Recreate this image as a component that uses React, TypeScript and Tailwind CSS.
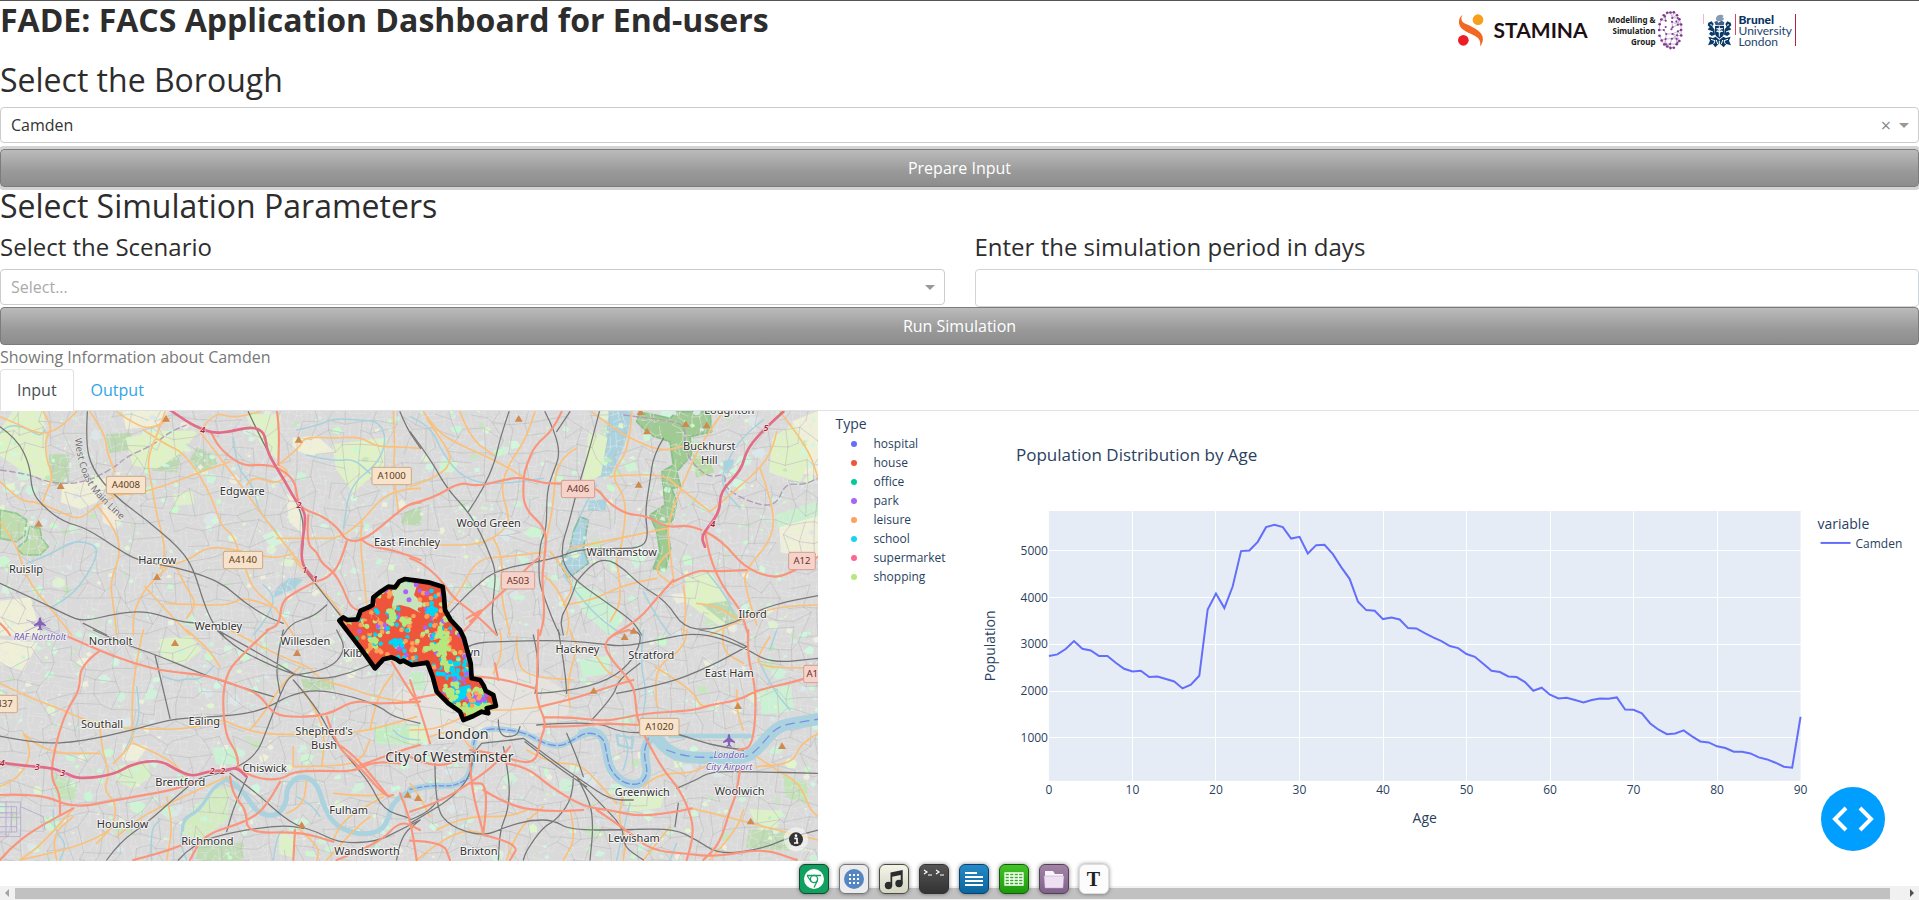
import { useState } from "react";
import type { ReactNode } from "react";

/* ---------- geometry helpers ---------- */

type Line = string;

// Turns "x,y x,y ..." into a smooth path that runs through segment midpoints.
function smooth(points: Line): string {
  const p = points.split(" ").map((s) => s.split(",").map(Number));
  let d = `M${p[0][0]},${p[0][1]}`;
  for (let i = 1; i < p.length - 1; i++) {
    const mx = (p[i][0] + p[i + 1][0]) / 2;
    const my = (p[i][1] + p[i + 1][1]) / 2;
    d += `Q${p[i][0]},${p[i][1]} ${mx},${my}`;
  }
  const last = p[p.length - 1];
  return d + `L${last[0]},${last[1]}`;
}

const paths = (lines: Line[]) => lines.map(smooth).join("");

function random(seed: number) {
  let a = seed * 2654435761;
  return () => {
    a = (a + 0x6d2b79f5) | 0;
    let t = Math.imul(a ^ (a >>> 15), 1 | a);
    t = (t + Math.imul(t ^ (t >>> 7), 61 | t)) ^ t;
    return ((t ^ (t >>> 14)) >>> 0) / 4294967296;
  };
}

const MAP_W = 2454;
const MAP_H = 1350;

function streetMesh(step: number, seed: number, keep: number): string {
  const r = random(seed);
  const cols = Math.ceil(MAP_W / step) + 2;
  const rows = Math.ceil(MAP_H / step) + 2;
  const pts: number[][][] = [];
  for (let j = 0; j < rows; j++) {
    pts.push([]);
    for (let i = 0; i < cols; i++) {
      pts[j].push([
        Math.round((i - 0.5 + (r() - 0.5) * 0.9) * step),
        Math.round((j - 0.5 + (r() - 0.5) * 0.9) * step),
      ]);
    }
  }
  let d = "";
  for (let j = 0; j < rows - 1; j++) {
    for (let i = 0; i < cols - 1; i++) {
      const [x, y] = pts[j][i];
      if (r() < keep) d += `M${x},${y}L${pts[j][i + 1][0]},${pts[j][i + 1][1]}`;
      if (r() < keep) d += `M${x},${y}L${pts[j + 1][i][0]},${pts[j + 1][i][1]}`;
    }
  }
  return d;
}

const GREENS = ["#c9f5d6", "#c8facc", "#d2f7dc", "#dff6cf", "#c6e6bd", "#cff7e0", "#cdf3d8", "#eef0dc", "#dbe7ea"];

function patches(count: number, seed: number, min: number, max: number) {
  const r = random(seed);
  const out: { d: string; fill: string }[] = [];
  for (let k = 0; k < count; k++) {
    const x = r() * MAP_W;
    const y = r() * MAP_H;
    const central = Math.hypot((x - 1480) / 700, (y - 820) / 380) < 0.6;
    const s = (min + r() * r() * (max - min)) * (central ? 0.6 : 1);
    const turn = r() * 6;
    const n = 4 + Math.floor(r() * 3);
    let d = "";
    for (let i = 0; i < n; i++) {
      const a = turn + (i / n) * Math.PI * 2;
      const q = s * (0.6 + r() * 0.6);
      d += `${i ? "L" : "M"}${Math.round(x + Math.cos(a) * q)},${Math.round(y + Math.sin(a) * q * 0.85)}`;
    }
    out.push({ d: d + "Z", fill: GREENS[Math.floor(r() * GREENS.length)] });
  }
  return out;
}

/* ---------- map data, four tiles ---------- */

interface Tile {
  x: number;
  y: number;
  motorway: Line[];
  primary: Line[];
  secondary: Line[];
  rail: Line[];
  stream: Line[];
  border: Line[];
}

const TILES: Tile[] = [
  {
    x: 0,
    y: -18,
    motorway: ["510,15 560,50 600,70 640,85 690,80 740,68 775,70 795,90 800,130 815,165 850,220 885,285 915,320 915,360 905,420 905,480 945,525"],
    primary: [
      "635,85 650,120 700,165 740,183 780,178 832,185 885,225 892,285 908,312 970,335 1015,370 1040,410 1095,405 1190,325 1225,298 1262,292",
      "830,15 838,60 835,180",
      "925,330 918,415 950,440 965,475 1000,500 1030,550 1050,605 1085,620",
      "0,655 20,675 30,690",
      "1040,410 1020,480 980,520 945,530 880,565 845,590 838,660 800,675",
      "1090,408 1110,425 1180,435 1262,465",
    ],
    secondary: [
      "130,20 160,70 135,100 140,170 160,210 140,260 125,300",
      "270,20 315,85 320,140 345,200",
      "350,20 420,70 470,65 510,40",
      "495,20 480,70 440,160 455,240 470,330 490,400 495,450 480,490",
      "430,75 500,120 545,140 600,210 640,290 665,365 700,390 715,440 740,500 760,555 830,610 880,690",
      "600,80 700,210 780,320 840,400 905,480",
      "330,270 400,270 500,240 590,205 690,170",
      "0,230 60,290 110,290 190,325 240,345 290,300 345,275",
      "290,300 340,360 365,440 330,530 340,600 350,690",
      "0,350 50,420 70,490 100,550 160,620 215,690",
      "480,490 560,470 620,425 700,432 790,455 840,458 880,445",
      "500,490 440,540 400,620 400,690",
      "530,490 560,550 590,595 560,640",
      "500,595 600,600 690,600 730,575 830,610",
      "835,180 870,150 900,125 915,95 1000,100 1080,95 1130,125 1190,125 1262,130",
      "740,240 760,210 830,240 870,200 835,180",
      "1180,20 1185,120 1180,200 1195,320",
      "1262,250 1170,250 1085,350 1020,400 950,400 830,400",
      "1085,350 1080,410 1090,500 1100,600",
      "0,35 60,60 120,90 180,70 230,20",
      "570,690 520,640 435,545",
      "600,80 640,20 700,40 780,20",
      "880,460 930,520 1000,590 1030,640",
    ],
    rail: [
      "0,65 50,100 90,180 95,260 130,305 190,350 260,370 350,430 415,468 520,485 620,515 680,545 730,590 800,635 850,655",
      "262,20 257,110 275,190 345,275 440,345 540,430 580,490 610,590 640,660 670,690",
      "745,20 800,140 905,310 912,400 902,480 945,535 1020,630",
      "0,535 120,590 200,630 250,650 350,625 440,618 540,650 600,655",
      "250,655 320,690",
      "850,690 870,655 940,635 980,600",
      "1200,20 1220,70 1262,130",
    ],
    stream: [
      "0,85 20,60 70,65 120,95 135,75",
      "890,75 960,60 1000,40 1080,45 1140,50 1160,110 1130,180 1050,240 1030,370",
      "920,150 1000,170 1060,160 1110,205",
      "700,100 710,190 760,240 775,320 830,380",
      "80,475 150,450 220,405 290,420 290,460 230,560 150,610",
      "790,540 830,570 800,640 760,690",
    ],
    border: ["0,195 80,205 150,235 250,235 340,190 380,155 460,120 510,80 560,60"],
  },
  {
    x: 1230,
    y: -18,
    motorway: ["1120,20 1080,55 1010,130 995,195 930,260 930,320 885,378 875,400 885,425"],
    primary: [
      "0,298 70,280 150,230 200,245 300,220 340,218 400,235 460,235 560,245 590,290 650,328 710,332 770,368 830,360 875,375",
      "455,20 430,75 375,120 350,180 340,218 340,310 410,370 405,450 395,520 405,630 390,690",
      "885,378 940,410 1000,485 1085,520 1140,505 1225,455",
      "790,530 860,495 900,500 1010,495",
      "885,378 895,450 940,550 990,610 1015,690",
      "790,525 740,580 690,640 610,690",
      "0,460 30,470 90,520 130,580 200,630 260,690",
      "180,650 280,560 350,490 390,455",
      "150,690 240,600 170,640",
    ],
    secondary: [
      "40,20 80,80 150,120 220,150 300,190 340,218",
      "0,245 90,215 130,160 90,100 50,40",
      "375,20 350,100 300,170 270,250 300,340 280,380 210,420 100,420 0,420",
      "250,400 280,450 270,560 300,690",
      "500,130 440,160 430,300 410,400",
      "545,20 610,70 680,110 760,140 830,120",
      "665,20 660,130 600,210 650,280 640,400 620,470",
      "600,215 750,200 810,250 900,320",
      "940,20 880,100 820,230 770,360 780,440 790,520",
      "1100,80 1090,130 1050,190 960,270 900,320",
      "1050,190 1090,300 1090,400 1000,500 1010,560 1040,660",
      "480,430 600,405 700,385 770,370",
      "620,470 640,580 600,650",
      "460,600 540,590 640,540 740,520",
      "820,540 830,600 820,690",
      "780,440 720,490 790,540",
      "860,595 920,600 990,650",
      "1225,600 1120,600 1000,640 900,690",
      "410,440 300,455 200,460 150,560 100,620",
      "420,440 500,530 460,600",
      "1110,20 1190,120 1225,220",
      "150,20 180,100 250,150",
      "400,510 440,540 480,640 470,690",
    ],
    rail: [
      "0,80 60,160 110,250 175,320 215,390 240,450 258,500 250,580 245,640 262,690",
      "297,20 270,100 255,170 220,250 175,320",
      "405,20 435,80 450,150 430,200 410,260 410,375 390,410 385,520 400,570 430,650 450,690",
      "568,20 540,130 500,260 475,360 455,420 460,480 500,530 600,600 670,650 695,690",
      "480,20 440,80",
      "760,100 730,150 720,230 705,320 715,400 690,430 600,430 500,435 450,455 385,470 260,495 200,540 120,620 60,690",
      "500,530 540,480 590,460 640,490 690,540 770,590 820,668 900,675 980,650 1060,610 1130,590 1225,572",
      "500,530 480,590 450,640 460,690",
    ],
    stream: [
      "0,35 60,60 100,150 160,220 250,240 400,220",
      "460,510 520,590 580,650 640,690",
      "1060,45 1000,90 950,170 930,240 990,310",
      "560,240 530,290 510,335",
      "700,560 730,620 780,690",
      "890,500 940,560 970,620",
    ],
    border: ["640,30 720,40 760,45 830,60 820,140 890,220 950,205 940,250 1040,300 1100,300 1125,235 1180,240 1225,220"],
  },
  {
    x: 0,
    y: 657,
    motorway: ["0,398 80,408 150,413 190,425 235,448 340,435 400,400 480,390 530,420 575,440 620,425 680,420 710,412 740,440"],
    primary: [
      "205,20 300,62 400,100 500,125 620,135 720,170 780,195 810,240 850,262 980,258 1060,210 1130,222 1260,215",
      "300,62 240,105 240,180 200,240 170,330 150,440 180,490 180,555",
      "805,0 740,60 668,140 672,310 712,370 715,420",
      "0,495 120,490 220,535 350,510 530,478 590,450",
      "0,690 30,655 100,600 220,535",
      "715,415 760,445 840,450 880,425 960,422 1060,425 1120,395 1200,400",
      "840,455 800,530 740,575 610,615 570,690",
      "690,440 695,490 740,540 740,610 900,605 1000,635",
      "885,600 880,690",
      "980,260 1010,350 1070,400 1155,500 1180,495",
      "1010,340 1060,370 1165,500",
      "1175,95 1215,160 1250,215",
      "1070,410 1150,380 1240,350 1260,345",
      "1010,690 1140,640 1200,570 1260,600",
      "400,690 480,670 560,640",
      "1200,490 1230,560 1250,690",
    ],
    secondary: [
      "0,160 80,200 190,240 300,290 400,295 550,300 670,270",
      "300,290 305,360 330,430 310,480 350,520 340,590 290,640",
      "430,0 400,130 395,290 400,340 340,400",
      "400,340 470,370 520,400 560,440",
      "560,0 620,50 660,110",
      "70,310 100,360 60,440 0,470",
      "220,535 130,640 60,690",
      "170,690 150,620 220,560",
      "350,620 420,560 530,510 680,440",
      "500,500 520,580 500,690",
      "690,0 840,80 930,110 960,150 1040,170 1120,200 1250,220",
      "670,270 750,310 900,315 1010,315 1110,300 1250,260",
      "750,300 800,240 840,170 900,110",
      "910,180 960,260 975,330 965,410",
      "880,410 960,410 1080,400 1110,330",
      "1000,630 1020,580 1080,540 1150,500",
      "860,550 910,530 920,450",
      "900,600 960,650 950,690",
      "980,690 1060,600 1110,560",
      "1000,490 1100,500 1160,490",
      "60,690 200,660 300,620 340,590",
      "880,350 880,410",
      "70,310 130,370 300,370",
      "1110,300 1130,200 1180,130",
    ],
    rail: [
      "280,0 380,45 470,75 600,130 700,165 820,200",
      "465,75 490,180 510,265",
      "0,318 120,342 240,335 400,300 510,268 600,262 720,255 800,235 870,195 950,178 1060,200 1140,230 1180,260 1260,280",
      "320,690 360,635 440,580 540,490 600,440 690,425 770,375 800,300 830,220 860,150 880,135",
      "650,0 700,50 800,100 870,130 960,150 1050,130 1130,95",
      "660,5 740,50 830,100 880,130",
      "850,0 825,100 840,190",
      "880,135 980,125 1040,60 1010,0",
      "690,430 760,480 870,580 950,605 1020,640 1130,635 1200,600 1260,570",
      "535,690 580,640 700,605 850,585 910,595",
      "740,445 705,520 680,605",
      "880,150 950,230 1000,330 1060,400 1110,460 1150,540 1230,565",
      "1190,690 1200,620 1260,570",
    ],
    stream: [
      "410,170 420,240 410,290 370,370",
      "490,140 530,155 560,145 600,150 640,110",
      "545,600 540,640 560,690",
      "160,540 160,600 200,640 180,690",
      "455,690 450,600 480,570",
      "820,690 830,620 850,600",
      "1180,300 1200,325 1260,330",
      "890,500 930,520 960,560",
    ],
    border: [],
  },
  {
    x: 1230,
    y: 657,
    motorway: [],
    primary: [
      "660,0 610,10 580,45 605,90 650,140 675,180 680,270 720,350 760,420 810,480 845,560 850,620 830,690",
      "1015,0 1010,70 1040,180 1030,350 985,360",
      "1225,130 1180,150 1040,180 990,210 900,225 850,242 700,250 590,275 490,262 400,262",
      "400,290 490,290 570,280 690,285",
      "385,0 382,130 378,210 410,280 390,330 380,390 340,400 250,370 180,360",
      "185,140 250,140 375,175",
      "0,150 40,270 60,340",
      "0,210 60,195 110,190",
      "290,400 350,410 420,470 520,530 600,540 690,560 800,545 845,535",
      "180,370 180,460 220,610",
      "220,480 300,530 420,545 520,540",
      "220,610 240,460 180,460",
      "0,545 80,520 180,460 260,400 300,350",
      "220,615 330,640 300,690",
      "990,420 980,490 960,540 930,640 880,690",
      "0,632 100,635 120,690",
      "560,540 650,600 720,660 830,672 920,680 1060,655 1160,690",
      "390,230 480,210 600,170 670,150",
      "255,100 265,150",
      "0,380 80,420 180,370",
    ],
    secondary: [
      "270,0 280,60 250,130",
      "480,0 500,60 550,60 590,130 650,150",
      "500,60 470,150 480,230",
      "830,0 830,50 735,110 740,230",
      "735,110 850,180 870,230 900,225",
      "1080,20 1040,80 1050,110 1180,115 1225,110",
      "940,0 930,60 1000,100",
      "1000,300 980,250 980,180",
      "1225,310 1170,340 1150,400 1040,410",
      "1040,380 1100,420 1170,460 1200,540 1225,560",
      "845,535 950,560 1060,590 1225,630",
      "700,470 740,430 850,430 900,400",
      "300,240 400,230",
      "60,320 150,290 160,330 200,370 290,400",
      "350,360 420,400 500,400 540,430 620,520",
      "0,460 30,500 60,560",
      "640,500 620,560 650,620 640,690",
      "80,600 150,560 300,560 350,540",
      "290,690 320,600 400,530",
      "480,540 500,620 460,690",
      "700,690 780,590",
      "0,300 60,300 120,280 200,240 300,240",
      "20,690 80,640 160,600 220,610",
      "900,690 980,600 1000,540",
      "320,20 320,100 360,140 490,150",
    ],
    rail: [
      "340,325 440,400 520,455 600,510 670,510",
      "345,335 440,410 530,470",
      "380,285 550,272 640,310 740,305 800,310 900,345 1000,360",
      "800,475 860,450 900,425 1020,425 1225,430",
      "370,15 390,100 375,190",
      "445,0 465,120 470,190",
      "380,190 470,185 600,150 670,90 700,10 650,0",
      "120,80 180,40 260,35 440,30 560,40 640,50 740,30 870,5 1000,50 1080,100 1225,85",
      "620,190 760,165 900,110 1010,50",
      "0,580 60,545 130,500 180,440 190,370 215,340",
      "0,570 50,550 85,510",
      "215,340 270,335 340,325",
      "265,270 265,320 320,320 330,290",
      "75,400 75,530 120,590 220,620 290,590 360,570 430,570 480,600 640,600 790,595 860,630 930,675 1060,655 1130,625 1225,600",
      "280,350 300,450 295,540 270,600 265,690",
      "500,440 540,510 550,590 540,690",
      "510,455 560,510 640,590 640,650 700,690",
      "490,440 490,500 440,570 400,590 350,660 340,690",
      "545,270 610,200 625,150 690,100",
      "470,310 500,380 520,440",
      "805,520 795,590",
      "870,0 930,10 1010,50",
    ],
    stream: [
      "700,0 690,100 710,180 700,250 690,320",
      "640,310 660,350 640,420",
      "1050,100 1090,180 1140,240",
      "620,690 640,600 660,520",
      "1100,0 1080,60",
      "780,690 800,640",
    ],
    border: [],
  },
];

const AREAS: { tile: number; fill: string; stroke?: string; pts: string }[] = [
  { tile: 0, fill: "#bfdcaf", stroke: "#8cc98a", pts: "0,315 50,325 80,345 75,390 50,410 0,400" },
  { tile: 0, fill: "#bfdcaf", stroke: "#8cc98a", pts: "90,365 120,370 125,400 145,425 120,450 70,450 50,430 80,405" },
  { tile: 0, fill: "#bcd9b2", pts: "150,150 205,150 205,235 165,240 148,200" },
  { tile: 0, fill: "#bcd9b2", pts: "590,130 640,150 650,175 600,200 572,165" },
  { tile: 0, fill: "#bcd9b2", pts: "320,90 390,85 400,130 330,142" },
  { tile: 0, fill: "#bcd9b2", pts: "1215,325 1262,305 1262,360 1205,355" },
  { tile: 0, fill: "#bcd9b2", pts: "460,140 540,150 530,200 460,195" },
  { tile: 0, fill: "#dff2c4", pts: "40,20 130,20 135,110 150,230 60,190 0,150 0,80" },
  { tile: 0, fill: "#dff2c4", pts: "380,100 480,80 590,80 545,140 470,190 400,180" },
  { tile: 0, fill: "#f0f0d8", pts: "190,240 330,220 290,290 240,310 185,290" },
  { tile: 0, fill: "#f0f0d8", pts: "370,20 500,20 470,60 380,70" },
  { tile: 0, fill: "#dff2c4", pts: "740,30 840,30 830,160 780,110" },
  { tile: 0, fill: "#f0f0d8", pts: "880,100 950,95 1000,140 930,150 880,130" },
  { tile: 0, fill: "#dff2c4", pts: "1000,120 1160,100 1150,180 1060,260 1010,190" },
  { tile: 0, fill: "#f0f0d8", pts: "860,270 900,290 905,380 870,350" },
  { tile: 0, fill: "#f0f0d8", pts: "0,590 90,580 120,690 0,690" },
  { tile: 0, fill: "#f3ead8", pts: "310,300 370,330 350,370 310,350" },
  { tile: 0, fill: "#aad3df", pts: "870,520 905,525 880,550 820,575 835,548" },
  { tile: 0, fill: "#dcf2c6", pts: "520,270 575,262 580,295 530,300" },
  { tile: 1, fill: "#9fcb92", stroke: "#86c186", pts: "690,20 780,40 800,20 900,20 905,80 840,95 845,150 800,200 812,245 785,250 800,290 790,340 770,370 782,430 765,500 730,490 750,440 740,380 720,330 765,300 755,200 790,180 780,110 720,90 680,50" },
  { tile: 1, fill: "#b9dca4", pts: "850,150 900,170 910,200 860,215" },
  { tile: 1, fill: "#aad3df", pts: "600,15 665,15 655,70 640,120 600,210 565,215 590,100" },
  { tile: 1, fill: "#aad3df", stroke: "#83bfa4", pts: "510,335 535,345 520,430 535,475 475,520 450,480 480,430 490,380" },
  { tile: 1, fill: "#aad3df", pts: "540,290 585,285 585,315 535,315" },
  { tile: 1, fill: "#aad3df", pts: "940,170 972,165 965,205 940,200" },
  { tile: 1, fill: "#f0f0d8", pts: "1150,50 1225,20 1225,210 1150,200 1170,120" },
  { tile: 1, fill: "#dff2c4", pts: "1090,100 1150,60 1200,150 1170,230 1080,200" },
  { tile: 1, fill: "#f0f0d8", pts: "1110,360 1225,330 1225,460 1115,440" },
  { tile: 1, fill: "#c9efce", pts: "1100,330 1225,290 1225,330 1105,365" },
  { tile: 1, fill: "#dff2c4", pts: "830,520 900,500 980,640 930,660 830,590" },
  { tile: 1, fill: "#bcd9b2", pts: "880,600 950,590 985,640 950,655" },
  { tile: 1, fill: "#dff2c4", pts: "540,80 590,100 570,210 520,230" },
  { tile: 1, fill: "#c9f2d2", pts: "480,530 560,560 640,640 600,690 520,620" },
  { tile: 2, fill: "#d2ecbf", pts: "560,560 640,480 690,475 680,570 600,625 550,610" },
  { tile: 2, fill: "#c3ecc3", pts: "1120,290 1262,285 1262,345 1130,340" },
  { tile: 2, fill: "#bcd9b2", pts: "905,150 1000,150 1000,175 915,178" },
  { tile: 2, fill: "#d6efc5", pts: "350,410 440,400 450,440 400,475 350,450" },
  { tile: 2, fill: "#f0f0d8", pts: "370,345 440,350 410,390 370,390" },
  { tile: 2, fill: "#dcf2c6", pts: "480,30 570,20 600,60 550,100 490,80" },
  { tile: 2, fill: "#f0f0d8", pts: "0,30 110,40 70,120 0,100" },
  { tile: 2, fill: "#c3e3b8", pts: "160,440 230,460 220,510 170,500" },
  { tile: 2, fill: "#dcf2c6", pts: "840,610 890,605 880,680 840,670" },
  { tile: 2, fill: "#bfdcb5", pts: "600,640 730,640 725,690 590,690" },
  { tile: 2, fill: "#c9f2d2", pts: "640,355 700,355 710,400 650,400" },
  { tile: 3, fill: "#dcf2c6", pts: "1020,540 1110,545 1100,590 1050,600" },
  { tile: 3, fill: "#bfdcb5", pts: "1020,600 1150,610 1140,660 1010,650" },
  { tile: 3, fill: "#dcf2c6", pts: "640,500 760,495 750,530 660,545" },
  { tile: 3, fill: "#c9f2d2", pts: "510,90 600,80 590,130 520,140" },
  { tile: 3, fill: "#c3ecc3", pts: "0,130 40,130 45,180 0,180" },
  { tile: 3, fill: "#dcf2c6", pts: "0,290 40,290 60,330 0,340" },
  { tile: 3, fill: "#c9f2d2", pts: "1050,180 1140,170 1150,240 1060,250" },
  { tile: 3, fill: "#c3e3b8", pts: "1120,440 1190,460 1190,520 1130,500" },
];

const THAMES: { w: number; tile: number; pts: string }[] = [
  { tile: 2, w: 10, pts: "548,600 545,570 600,540 640,470 690,445" },
  { tile: 2, w: 15, pts: "680,446 730,480 770,550 830,560 860,520 860,470 900,435 950,455 975,540 1010,590 1080,615 1140,605 1165,570 1175,520 1230,480 1262,475" },
  { tile: 3, w: 17, pts: "0,478 60,465 130,470 175,445 190,380 190,325 225,297 280,297 350,310 400,340 450,350 490,330 530,305" },
  { tile: 3, w: 26, pts: "515,312 545,300 580,320 590,370 600,420 640,460 690,465 715,430 700,370 715,325 750,325 770,360" },
  { tile: 3, w: 36, pts: "745,330 770,360 820,382 920,385 1010,385 1050,350 1100,290 1160,278 1240,265" },
];

const PLACES: { tile: number; x: number; y: number; t: string; s?: number }[] = [
  { tile: 0, x: 727, y: 270, t: "Edgware" },
  { tile: 0, x: 472, y: 478, t: "Harrow" },
  { tile: 0, x: 78, y: 504, t: "Ruislip" },
  { tile: 0, x: 655, y: 675, t: "Wembley" },
  { tile: 1, x: -9, y: 424, t: "East Finchley" },
  { tile: 1, x: 236, y: 365, t: "Wood Green" },
  { tile: 1, x: 635, y: 454, t: "Walthamstow" },
  { tile: 1, x: 898, y: 134, t: "Buckhurst" },
  { tile: 1, x: 898, y: 177, t: "Hill" },
  { tile: 1, x: 958, y: 26, t: "Loughton" },
  { tile: 1, x: 1028, y: 639, t: "Ilford" },
  { tile: 2, x: 332, y: 45, t: "Northolt" },
  { tile: 2, x: 916, y: 46, t: "Willesden" },
  { tile: 2, x: 306, y: 294, t: "Southall" },
  { tile: 2, x: 613, y: 284, t: "Ealing" },
  { tile: 2, x: 972, y: 314, t: "Shepherd's" },
  { tile: 2, x: 972, y: 356, t: "Bush" },
  { tile: 2, x: 794, y: 427, t: "Chiswick" },
  { tile: 2, x: 541, y: 469, t: "Brentford" },
  { tile: 2, x: 368, y: 593, t: "Hounslow" },
  { tile: 2, x: 622, y: 644, t: "Richmond" },
  { tile: 2, x: 1046, y: 551, t: "Fulham" },
  { tile: 2, x: 1101, y: 675, t: "Wandsworth" },
  { tile: 3, x: 502, y: 69, t: "Hackney" },
  { tile: 3, x: 724, y: 87, t: "Stratford" },
  { tile: 3, x: 958, y: 140, t: "East Ham" },
  { tile: 3, x: 697, y: 499, t: "Greenwich" },
  { tile: 3, x: 989, y: 494, t: "Woolwich" },
  { tile: 3, x: 672, y: 635, t: "Lewisham" },
  { tile: 3, x: 206, y: 675, t: "Brixton" },
  { tile: 3, x: 159, y: 326, t: "London", s: 43 },
  { tile: 3, x: 118, y: 396, t: "City of Westminster", s: 42 },
];

const SHIELDS: { tile: number; x: number; y: number; w: number; t: string; red?: boolean }[] = [
  { tile: 0, x: 378, y: 240, w: 118, t: "A4008" },
  { tile: 0, x: 1175, y: 213, w: 118, t: "A1000" },
  { tile: 0, x: 729, y: 465, w: 118, t: "A4140" },
  { tile: 1, x: 504, y: 252, w: 100, t: "A406", red: true },
  { tile: 1, x: 324, y: 526, w: 100, t: "A503", red: true },
  { tile: 1, x: 1176, y: 468, w: 80, t: "A12", red: true },
  { tile: 2, x: 4, y: 222, w: 96, t: "A437" },
  { tile: 3, x: 748, y: 291, w: 118, t: "A1020" },
  { tile: 3, x: 1215, y: 132, w: 68, t: "A13", red: true },
];

const JUNCTIONS: [number, number, number, string][] = [
  [0, 608, 84, "4"], [0, 897, 309, "2"], [0, 914, 505, "1"], [0, 946, 531, "1"],
  [1, 1068, 78, "5"], [1, 908, 365, "4"],
  [2, 7, 408, "4"], [2, 112, 421, "3"], [2, 188, 437, "3"], [2, 637, 432, "2"], [2, 668, 432, "2"],
];

const PEAKS: [number, number, number][] = [
  [0, 498, 40], [0, 896, 103], [0, 182, 242], [0, 116, 355], [0, 471, 515],
  [1, 326, 40], [1, 711, 78], [1, 686, 238], [1, 827, 56], [1, 890, 60], [1, 692, 20], [1, 671, 676],
  [2, 525, 38], [2, 891, 68], [2, 905, 584], [2, 1223, 493],
  [3, 24, 503], [3, 644, 20], [3, 551, 181], [3, 984, 227], [3, 1116, 347], [3, 1022, 573],
];

const CAMDEN =
  "58,182 70,172 82,180 112,178 122,152 145,142 158,135 160,112 182,95 205,80 225,82 238,64 255,57 290,62 325,67 368,80 372,110 375,150 392,180 420,210 432,235 440,265 452,310 455,355 480,360 490,375 497,392 520,405 528,438 500,445 505,460 485,455 460,468 430,480 420,455 385,430 350,395 338,350 322,308 275,315 250,302 240,306 230,298 215,292 190,298 165,325 120,262";

const DOT_COLORS = ["#ef553b", "#ffa15a", "#00d5f5", "#ab63fa", "#b6e880", "#00cc96"];

function venueDots() {
  const r = random(41);
  const dots: { x: number; y: number; c: string }[] = [];
  for (let k = 0; k < 520; k++) {
    const q = r();
    const c = q < 0.32 ? 0 : q < 0.57 ? 1 : q < 0.75 ? 2 : q < 0.84 ? 3 : q < 0.98 ? 4 : 5;
    const x = 70 + r() * 380;
    const y = 60 + r() * 290;
    if (Math.hypot(x - 258, y - 112) < 40) continue;
    dots.push({ x, y, c: DOT_COLORS[c] });
  }
  const cluster = (n: number, cx: number, cy: number, sx: number, sy: number, c: string) => {
    for (let k = 0; k < n; k++) {
      dots.push({ x: cx + (r() + r() - 1) * sx, y: cy + (r() + r() - 1) * sy, c });
    }
  };
  cluster(16, 215, 172, 14, 28, "#b6e880");
  cluster(8, 255, 185, 14, 12, "#b6e880");
  cluster(10, 160, 242, 18, 9, "#b6e880");
  cluster(12, 235, 250, 26, 14, "#00d5f5");
  cluster(9, 335, 152, 18, 12, "#00d5f5");
  cluster(46, 368, 250, 20, 75, "#b6e880");
  cluster(24, 350, 262, 44, 10, "#b6e880");
  cluster(14, 380, 320, 10, 26, "#b6e880");
  cluster(30, 415, 345, 38, 50, "#00d5f5");
  cluster(24, 430, 385, 80, 60, "#ab63fa");
  cluster(14, 425, 370, 60, 60, "#ef553b");
  cluster(44, 422, 402, 42, 34, "#00d5f5");
  cluster(22, 395, 395, 26, 34, "#b6e880");
  cluster(60, 455, 446, 74, 24, "#b6e880");
  cluster(16, 470, 390, 30, 30, "#b6e880");
  cluster(16, 465, 420, 36, 20, "#00d5f5");
  cluster(12, 475, 410, 40, 25, "#ab63fa");
  cluster(8, 462, 415, 40, 25, "#ffa15a");
  return dots;
}

const FINE_STREETS = streetMesh(19, 7, 0.6);
const STREETS = streetMesh(46, 23, 0.68);
const SMALL_PATCHES = patches(1150, 11, 4, 20);
const LARGE_PATCHES = patches(150, 5, 14, 42);
const VENUES = venueDots();

const at = (tile: number) => `translate(${TILES[tile].x} ${TILES[tile].y})`;

function LondonMap() {
  const each = (draw: (t: Tile, i: number) => ReactNode) =>
    TILES.map((t, i) => (
      <g key={i} transform={at(i)}>
        {draw(t, i)}
      </g>
    ));
  return (
    <svg
      role="img"
      aria-label="Map of locations in Camden"
      className="block h-[450px] w-full"
      viewBox={`0 0 ${MAP_W} ${MAP_H}`}
      preserveAspectRatio="xMinYMin slice"
      fill="none"
      strokeLinecap="round"
      strokeLinejoin="round"
      fontFamily="'Noto Sans', sans-serif"
    >
      <defs>
        <clipPath id="camden">
          <polygon points={CAMDEN} />
        </clipPath>
        <path id="mainline" d="M224,82C232,150 244,190 272,234C300,272 345,310 400,362" />
      </defs>
      <rect width={MAP_W} height={MAP_H} fill="#dadada" />
      <ellipse cx="1440" cy="880" rx="270" ry="110" fill="#e9e5df" opacity="0.8" />
      {LARGE_PATCHES.map((p, i) => (
        <path key={i} d={p.d} fill={p.fill} opacity="0.85" />
      ))}
      {AREAS.map((a, i) => (
        <g key={i} transform={at(a.tile)}>
          <polygon points={a.pts} fill={a.fill} stroke={a.stroke ?? a.fill} strokeWidth="5" />
        </g>
      ))}
      <path d={FINE_STREETS} stroke="#e6e6e6" strokeWidth="1.6" />
      {SMALL_PATCHES.map((p, i) => (
        <path key={i} d={p.d} fill={p.fill} />
      ))}
      <path d={STREETS} stroke="#bdbdbd" strokeWidth="1.8" />

      {THAMES.map((r, i) => (
        <g key={i} transform={at(r.tile)}>
          <path d={smooth(r.pts)} stroke="#aad3df" strokeWidth={r.w} />
        </g>
      ))}
      <g transform={at(3)}>
        <path d="M780,318H1020" stroke="#aad3df" strokeWidth="13" />
        <path d="M620,315L670,325L665,355L625,345Z" stroke="#aad3df" strokeWidth="7" />
        <path
          d={smooth("180,440 190,380 190,325 225,297 280,297 350,310 400,340 450,350 490,330 530,305 580,320 590,370 600,420 640,460 690,465 715,430 700,370 715,325")}
          stroke="#7b8fe8"
          strokeWidth="4"
          strokeDasharray="22 10"
        />
        <path d={smooth("770,360 820,380 920,383 1010,385 1050,350 1100,290 1160,278 1240,265")} stroke="#7b8fe8" strokeWidth="4" strokeDasharray="26 18" />
        <path d={smooth("0,478 60,465 130,470 175,445")} stroke="#7b8fe8" strokeWidth="4" strokeDasharray="14 8" />
      </g>
      {each((t) => (
        <>
          <path d={paths(t.stream)} stroke="#a5d2de" strokeWidth="4.5" />
          <path d={paths(t.border)} stroke="#b39bb5" strokeWidth="4" strokeDasharray="20 7" strokeLinecap="butt" />
        </>
      ))}
      {each((t) => (
        <path d={paths(t.secondary)} stroke="#fbc07a" strokeWidth="5" />
      ))}
      {each((t) => (
        <path d={paths(t.rail)} stroke="#777777" strokeWidth="3.8" />
      ))}
      {each((t) => (
        <path d={paths(t.primary)} stroke="#fa957c" strokeWidth="6.5" />
      ))}
      {each((t) => (
        <path d={paths(t.motorway)} stroke="#e46b86" strokeWidth="8" />
      ))}

      <g transform={at(2)} stroke="#b9afd0" strokeWidth="3">
        <path d="M0,516H62V620H0M0,530H50V606H0M0,548H50M0,562H62M0,590H50M18,516V620M34,530V606" />
        <path d="M62,530L130,560L135,600" />
      </g>
      <g transform={at(0)} stroke="#b3a6d3" strokeWidth="3">
        <path d="M80,645L150,672M75,680L150,645M95,655L180,690" />
      </g>

      {PEAKS.map(([t, x, y], i) => (
        <g key={i} transform={at(t)}>
          <path d={`M${x},${y - 10}l12,20h-24z`} fill="#d08a4e" />
        </g>
      ))}

      <text fontSize="29" fill="#707070" stroke="#e8e8e8" strokeWidth="3" paintOrder="stroke">
        <textPath href="#mainline" startOffset="0">West Coast Main Line</textPath>
      </text>

      {SHIELDS.map((s) => (
        <g key={s.t} transform={at(s.tile)}>
          <rect
            x={s.x - s.w / 2}
            y={s.y - 26}
            width={s.w}
            height="52"
            rx="5"
            fill={s.red ? "#f5d3cb" : "#f7e2cb"}
            stroke={s.red ? "#d79d91" : "#cfa982"}
            strokeWidth="3"
          />
          <text x={s.x} y={s.y + 10} textAnchor="middle" fontSize="29" fill={s.red ? "#6d3127" : "#5f3d17"}>
            {s.t}
          </text>
        </g>
      ))}

      {JUNCTIONS.map(([t, x, y, n], i) => (
        <g key={i} transform={at(t)}>
          <text x={x} y={y} textAnchor="middle" fontSize="27" fontStyle="italic" fontWeight="600" fill="#a52a38" stroke="#f3dfe2" strokeWidth="4" paintOrder="stroke">
            {n}
          </text>
        </g>
      ))}

      <g fill="#333333" stroke="#ffffff" strokeOpacity="0.75" strokeWidth="6" paintOrder="stroke" textAnchor="middle">
        {PLACES.map((p, i) => (
          <g key={i} transform={at(p.tile)}>
            <text x={p.x} y={p.y} fontSize={p.s ?? 33}>
              {p.t}
            </text>
          </g>
        ))}
        <text x="1085" y="737" fontSize="33">Kilburn</text>
        <text x="1440" y="734" fontSize="33" textAnchor="end">Camden Town</text>
      </g>

      <g fill="#6f56a8" stroke="#ffffff" strokeOpacity="0.7" strokeWidth="5" paintOrder="stroke" textAnchor="middle" fontStyle="italic" fontSize="28">
        <text x="120" y="686">RAF Northolt</text>
        <text x="2187" y="1040">London</text>
        <text x="2187" y="1076">City Airport</text>
      </g>
      {[[120, 638], [2187, 988]].map(([x, y]) => (
        <path
          key={x}
          transform={`translate(${x} ${y})`}
          d="M0,-19C3,-19 4,-14 4,-8L18,4V8L4,4L3,13L8,18V20L0,18L-8,20V18L-3,13L-4,4L-18,8V4L-4,-8C-4,-14 -3,-19 0,-19Z"
          fill="#8362b8"
        />
      ))}

      <g transform="translate(960 447)">
        <g clipPath="url(#camden)">
          <polygon points={CAMDEN} fill="#ef553b" />
          <polygon points="238,66 275,62 290,80 282,105 308,130 300,158 268,142 240,135 215,140 222,110 210,100" fill="#c6e3bb" />
          {VENUES.map((v, i) => (
            <circle key={i} cx={v.x} cy={v.y} r="7" fill={v.c} />
          ))}
          <circle cx="257" cy="95" r="7.5" fill="#ab63fa" />
          <circle cx="267" cy="119" r="7.5" fill="#ab63fa" />
          <circle cx="321" cy="100" r="7.5" fill="#ab63fa" />
          <circle cx="289" cy="74" r="7.5" fill="#ab63fa" />
        </g>
        <polygon points={CAMDEN} stroke="#000000" strokeWidth="14" />
      </g>

      <g transform="translate(2388 1285)">
        <circle r="36" fill="#ffffff" opacity="0.5" />
        <circle r="21" fill="#333333" />
        <path d="M-5,-3H3V11M-6,11H7" stroke="#ffffff" strokeWidth="5" strokeLinecap="butt" />
        <circle cx="0" cy="-11" r="4" fill="#ffffff" />
      </g>
    </svg>
  );
}

/* ---------- legend and chart ---------- */

const PLACE_TYPES = [
  { name: "hospital", dot: "bg-[#636efa]" },
  { name: "house", dot: "bg-[#ef553b]" },
  { name: "office", dot: "bg-[#00cc96]" },
  { name: "park", dot: "bg-[#ab63fa]" },
  { name: "leisure", dot: "bg-[#ffa15a]" },
  { name: "school", dot: "bg-[#19d3f3]" },
  { name: "supermarket", dot: "bg-[#ff6692]" },
  { name: "shopping", dot: "bg-[#b6e880]" },
];

const POPULATION = [
  2747, 2783, 2897, 3068, 2904, 2868, 2747, 2747, 2604, 2476, 2419, 2433, 2298, 2312, 2255, 2205, 2055, 2134, 2326, 3745,
  4087, 3774, 4237, 4993, 5007, 5193, 5506, 5556, 5506, 5264, 5299, 4943, 5121, 5128, 4929, 4651, 4401, 3909, 3731, 3717,
  3538, 3574, 3531, 3346, 3339, 3240, 3147, 3068, 2961, 2918, 2790, 2733, 2583, 2433, 2405, 2312, 2298, 2191, 2005, 2070,
  1920, 1841, 1856, 1806, 1756, 1806, 1841, 1834, 1863, 1606, 1599, 1520, 1306, 1171, 1078, 1092, 1157, 1028, 921, 900,
  815, 779, 700, 700, 665, 579, 536, 465, 380, 358, 1449,
];

const xOf = (age: number) => 89 + (age * 752) / 90;
const yOf = (v: number) => 139.9 + ((5000 - v) * 46.75) / 1000;

function PopulationChart() {
  return (
    <svg
      role="img"
      aria-label="Population Distribution by Age"
      className="block h-[450px] w-full"
      viewBox="0 0 960 450"
      preserveAspectRatio="xMinYMin meet"
      fontFamily="'Open Sans', sans-serif"
      fill="#2a3f5f"
    >
      <text x="56" y="50" fontSize="17">Population Distribution by Age</text>
      <rect x="89" y="100" width="752" height="270" fill="#e5ecf6" />
      <g stroke="#ffffff" strokeWidth="1" shapeRendering="crispEdges">
        {[10, 20, 30, 40, 50, 60, 70, 80].map((a) => (
          <path key={a} d={`M${xOf(a)},100V370`} />
        ))}
        {[1000, 2000, 3000, 4000, 5000].map((v) => (
          <path key={v} d={`M89,${yOf(v)}H841`} />
        ))}
      </g>
      <polyline
        points={POPULATION.map((v, i) => `${xOf(i).toFixed(1)},${yOf(v).toFixed(1)}`).join(" ")}
        fill="none"
        stroke="#636efa"
        strokeWidth="2"
      />
      <g fontSize="12" textAnchor="middle">
        {[0, 10, 20, 30, 40, 50, 60, 70, 80, 90].map((a) => (
          <text key={a} x={xOf(a)} y="383">{a}</text>
        ))}
      </g>
      <g fontSize="12" textAnchor="end">
        {[1000, 2000, 3000, 4000, 5000].map((v) => (
          <text key={v} x="88" y={Math.round(yOf(v) + 4)}>{v}</text>
        ))}
      </g>
      <text x="465" y="412" fontSize="14" textAnchor="middle">Age</text>
      <text transform="translate(35 235) rotate(-90)" fontSize="14" textAnchor="middle">Population</text>
      <text x="858" y="118" fontSize="14">variable</text>
      <path d="M861,132H891" stroke="#636efa" strokeWidth="2" />
      <text x="896" y="137" fontSize="12">Camden</text>
    </svg>
  );
}

/* ---------- logos ---------- */

function StaminaLogo() {
  return (
    <div className="flex items-center gap-[10px]">
      <svg width="26" height="33" viewBox="0 0 78 99" aria-hidden="true">
        <circle cx="60" cy="17" r="16" fill="#f99d1c" />
        <circle cx="16" cy="79" r="16" fill="#ee1c25" />
        <path
          d="M14,2C6,14 10,24 26,31C44,40 66,48 73,66C77,78 73,90 66,97C70,80 62,70 44,62C24,53 6,46 3,28C2,15 6,7 14,2Z"
          fill="#f26722"
        />
      </svg>
      <span className="font-['Lato',sans-serif] text-[21px] leading-6 font-bold text-[#1d1014]">STAMINA</span>
    </div>
  );
}

function brainNetwork() {
  const r = random(77);
  const nodes: number[][] = [];
  for (let i = 0; i < 20; i++) {
    const a = (i / 20) * Math.PI * 2;
    nodes.push([35 + Math.cos(a) * 32 * (0.92 + r() * 0.1), 60 + Math.sin(a) * 55 * (0.95 + r() * 0.08)]);
  }
  for (let j = 0; j < 7; j++) {
    for (let i = 0; i < 3; i++) {
      nodes.push([16 + i * 17 + r() * 8, 18 + j * 13 + r() * 8]);
    }
  }
  let links = "";
  nodes.forEach((a, i) =>
    nodes.forEach((b, j) => {
      const d = Math.hypot(a[0] - b[0], a[1] - b[1]);
      if (j > i && d < 19 && r() < 0.7) links += `M${a[0].toFixed(1)},${a[1].toFixed(1)}L${b[0].toFixed(1)},${b[1].toFixed(1)}`;
    }),
  );
  return { nodes, links };
}

const BRAIN = brainNetwork();

function ModellingLogo() {
  return (
    <div className="flex items-center gap-0.5">
      <div className="flex flex-col text-right font-['Noto_Sans',sans-serif] text-[8px] leading-[11px] font-bold text-[#1a1a1a]">
        <span>Modelling &amp;</span>
        <span>Simulation</span>
        <span>Group</span>
      </div>
      <svg width="25" height="40" viewBox="0 0 70 120" preserveAspectRatio="none" aria-hidden="true">
        <path d={BRAIN.links} stroke="#a98bb8" strokeWidth="1.8" fill="none" />
        {BRAIN.nodes.map(([x, y], i) => (
          <circle key={i} cx={x} cy={y} r={i < 20 ? 3.8 : 3} fill="#813a91" />
        ))}
      </svg>
    </div>
  );
}

function BrunelLogo() {
  return (
    <div className="flex h-8 items-start gap-[3px]">
      <span className="h-[10px] w-px bg-[#f3b7c2]" />
      <svg width="25" height="34" viewBox="0 0 75 102" fill="#0b3a66" aria-hidden="true">
        <path d="M28,10C30,2 44,0 50,6L46,10L52,14L44,22H32L26,16Z" opacity="0.5" />
        <path d="M22,24L30,20L34,26L44,20L52,25L50,34H26Z" opacity="0.8" />
        <path d="M4,26L14,22L20,30L16,38L22,46L24,62L14,66L6,60L12,52L2,46L8,40L2,34Z" />
        <path d="M71,26L61,22L55,30L59,38L53,46L51,62L61,66L69,60L63,52L73,46L67,40L73,34Z" />
        <path d="M24,36H51V58C51,66 44,70 37.5,74C31,70 24,66 24,58Z" />
        <path d="M4,68L18,72L26,68L37,78L49,68L57,72L71,68L66,80L72,94L58,90L50,100L37,88L25,100L17,90L3,94L9,80Z" />
        <g stroke="#ffffff" strokeWidth="3" fill="none">
          <path d="M28,44H48M28,52H48M37,37V68M10,32L16,34M8,50L18,54M66,32L60,34M67,50L57,54" />
          <path d="M12,76L24,80L20,90M63,76L51,80L55,90M37,80V90M28,78L32,90M47,78L43,90" />
          <circle cx="37.5" cy="50" r="5" />
        </g>
      </svg>
      <span className="h-[21px] w-px bg-[#c94a63]" />
      <div className="flex flex-col font-['Lato',sans-serif] text-[12px] leading-[11px] text-[#1d4670]">
        <strong className="font-black text-[#06335f]">Brunel</strong>
        <span>University</span>
        <span>London</span>
      </div>
      <span className="h-8 w-px bg-[#b8203f]" />
    </div>
  );
}

/* ---------- dock ---------- */

function DockIcon({ label, className, children }: { label: string; className: string; children: ReactNode }) {
  return (
    <button
      type="button"
      aria-label={label}
      className={`flex size-[30px] items-center justify-center rounded-[6px] border shadow-[0_0_4px_rgba(0,0,0,0.45)] ${className}`}
    >
      {children}
    </button>
  );
}

function Dock() {
  return (
    <nav aria-label="Applications" className="absolute bottom-[6px] left-1/2 flex -translate-x-1/2 gap-[10px] pr-[12px]">
      <DockIcon label="Browser" className="border-[#17452f] bg-[#10a05f]">
        <svg width="22" height="22" viewBox="0 0 22 22">
          <circle cx="11" cy="11" r="10" fill="#fff" />
          <g fill="none" stroke="#10a05f" strokeWidth="1.3">
            <circle cx="11" cy="11" r="3.6" />
            <path d="M4,7.5H18M4,7.5L8.5,14M11,19.5L14.5,12.5" />
          </g>
        </svg>
      </DockIcon>
      <DockIcon label="Applications" className="border-[#777] bg-[#ececee]">
        <svg width="22" height="22" viewBox="0 0 22 22">
          <circle cx="11" cy="11" r="10" fill="#5487c2" />
          <path d="M6,7h2M10,7h2M14,7h2M6,11h2M10,11h2M14,11h2M6,15h2M10,15h2M14,15h2" stroke="#fff" strokeWidth="2" />
        </svg>
      </DockIcon>
      <DockIcon label="Music" className="border-[#4b4b40] bg-linear-to-b from-[#f4f4e8] to-[#d5d5c4]">
        <svg width="20" height="22" viewBox="0 0 20 22" fill="#2a2d2e">
          <circle cx="4.5" cy="17.5" r="3.7" />
          <circle cx="15" cy="15.5" r="3.7" />
          <path d="M6.5,4.5L18.7,2V15.5H16.7V7L8.2,8.7V17.5H6.5Z" />
        </svg>
      </DockIcon>
      <DockIcon label="Terminal" className="border-[#333] bg-linear-to-b from-[#555] to-[#333]">
        <svg width="24" height="24" viewBox="0 0 24 24" fill="none" stroke="#fff" strokeWidth="1.2">
          <path d="M2,3L5,5L2,7M6,8H10M14,3L17,5L14,7M18,8H22" />
        </svg>
      </DockIcon>
      <DockIcon label="Writer" className="border-[#0b4168] bg-linear-to-b from-[#2589c8] to-[#0a669f]">
        <svg width="20" height="18" viewBox="0 0 20 18" stroke="#fff" strokeWidth="2">
          <path d="M1,3H13M1,7H19M1,11H19M1,15H19" />
        </svg>
      </DockIcon>
      <DockIcon label="Calc" className="border-[#145a0a] bg-linear-to-b from-[#41c427] to-[#1d9a0c]">
        <svg width="20" height="14" viewBox="0 0 20 14" fill="none" stroke="#fff" strokeWidth="1.3">
          <path d="M1,1H19V13H1ZM1,4H19M1,7H19M1,10H19M5.5,1V13M10,1V13M14.5,1V13" />
        </svg>
      </DockIcon>
      <DockIcon label="Files" className="border-[#54405a] bg-linear-to-b from-[#a184a4] to-[#80628a]">
        <svg width="22" height="20" viewBox="0 0 22 20">
          <path d="M2,2H10L12,5H20V12H2Z" fill="#fbf3fc" />
          <path d="M1,7H21L20,19H2Z" fill="#efdff3" stroke="#b79dbf" strokeWidth="0.5" />
        </svg>
      </DockIcon>
      <DockIcon label="Typora" className="border-[#ddd] bg-[#fcfcfc]">
        <span className="font-['Liberation_Serif',serif] text-[20px] leading-5 font-bold text-[#222]">T</span>
      </DockIcon>
    </nav>
  );
}

/* ---------- page ---------- */

const Caret = () => (
  <svg width="10" height="5" viewBox="0 0 10 5" aria-hidden="true">
    <path d="M0,0H10L5,5Z" fill="#999" />
  </svg>
);

const BUTTON =
  "block h-[38px] w-full rounded-[4px] border border-[#7c7c7c] bg-linear-to-b from-[#bbb] via-[#999] via-60% to-[#8d8d8d] text-base leading-6 text-white";

const SELECT = "h-9 w-full appearance-none rounded-[4px] border border-[#ccc] bg-white px-[10px] text-base outline-none";

export default function App() {
  const [borough, setBorough] = useState("Camden");
  const [scenario, setScenario] = useState("");
  const [days, setDays] = useState("");
  const [tab, setTab] = useState("Input");

  return (
    <div className="relative flex min-h-screen flex-col overflow-x-hidden border-t border-[#555] bg-white font-['Open_Sans',sans-serif] text-[#2d2d2d]">
      <header className="flex h-[60px] items-start justify-between">
        <h1 className="text-[32px] leading-[38px] font-bold">FADE: FACS Application Dashboard for End-users</h1>
        <div className="mt-[9px] mr-[123px] flex items-center gap-[20px]">
          <StaminaLogo />
          <ModellingLogo />
          <BrunelLogo />
        </div>
      </header>

      <main>
        <h2 className="mb-2 text-[32px] leading-[38px]">
          <label htmlFor="borough">Select the Borough</label>
        </h2>
        <div className="relative mb-[6px]">
          <select id="borough" value={borough} onChange={(e) => setBorough(e.target.value)} className={`${SELECT} text-[#333]`}>
            <option value="" />
            <option>Camden</option>
          </select>
          <div className="absolute inset-y-0 right-[10px] flex items-center gap-[8px]">
            <button type="button" aria-label="Clear borough" onClick={() => setBorough("")} className="text-[18px] leading-[18px] text-[#888]">
              ×
            </button>
            <Caret />
          </div>
        </div>
        <button type="button" className={`${BUTTON} ring-3 ring-[#d3d3d3]`}>
          Prepare Input
        </button>

        <h2 className="mb-[7px] text-[32px] leading-[38px]">Select Simulation Parameters</h2>
        <div className="grid grid-cols-2 gap-[30px]">
          <div>
            <h4 className="mb-2 text-2xl leading-[29px]">
              <label htmlFor="scenario">Select the Scenario</label>
            </h4>
            <div className="relative">
              <select id="scenario" value={scenario} onChange={(e) => setScenario(e.target.value)} className={`${SELECT} text-[#aaa]`}>
                <option value="">Select...</option>
              </select>
              <div className="pointer-events-none absolute inset-y-0 right-[10px] flex items-center">
                <Caret />
              </div>
            </div>
          </div>
          <div>
            <h4 className="mb-2 text-2xl leading-[29px]">
              <label htmlFor="days">Enter the simulation period in days</label>
            </h4>
            <input
              id="days"
              value={days}
              onChange={(e) => setDays(e.target.value)}
              className="block h-[38px] w-full rounded-[4px] border border-[#ced4da] bg-white px-3 text-base outline-none"
            />
          </div>
        </div>
        <button type="button" className={BUTTON}>
          Run Simulation
        </button>
        <p className="text-base leading-6 text-[#777]">Showing Information about Camden</p>

        <div role="tablist" className="flex h-[42px] border-b border-[#dee2e6]">
          {["Input", "Output"].map((name) => (
            <button
              key={name}
              type="button"
              role="tab"
              aria-selected={tab === name}
              onClick={() => setTab(name)}
              className={
                tab === name
                  ? "h-[42px] rounded-t-[4px] border border-[#dee2e6] border-b-white bg-white px-4 text-base leading-6 text-[#495057]"
                  : "h-[42px] border border-transparent px-4 text-base leading-6 text-[#2fa4e7]"
              }
            >
              {name}
            </button>
          ))}
        </div>

        <div className="flex">
          <section className="flex w-1/2 shrink-0">
            <div className="min-w-0 flex-1">
              <LondonMap />
            </div>
            <div className="w-[142px] pt-[3px] pl-[18px] text-[#2a3f5f]">
              <h3 className="text-sm leading-5">Type</h3>
              <ul>
                {PLACE_TYPES.map((t) => (
                  <li key={t.name} className="flex items-center gap-[17px] pl-[15px] text-xs leading-[19px]">
                    <span className={`size-[6px] rounded-full ${t.dot}`} />
                    {t.name}
                  </li>
                ))}
              </ul>
            </div>
          </section>
          <section className="w-1/2">
            <PopulationChart />
          </section>
        </div>
      </main>

      <div className="mt-auto flex h-[14px] items-center gap-[6px] bg-[#f1f1f1] px-[5px]">
        <svg width="4" height="8" viewBox="0 0 4 8" aria-hidden="true">
          <path d="M4,0V8L0,4Z" fill="#a3a3a3" />
        </svg>
        <div className="mr-[14px] h-[11px] flex-1 bg-[#c1c1c1]" />
        <svg width="4" height="8" viewBox="0 0 4 8" aria-hidden="true">
          <path d="M0,0V8L4,4Z" fill="#505050" />
        </svg>
      </div>

      <button
        type="button"
        aria-label="Developer tools"
        className="absolute right-[34px] bottom-[49px] flex size-16 items-center justify-center rounded-full bg-[#009fff]"
      >
        <svg width="42" height="26" viewBox="0 0 42 26" fill="none" stroke="#fff" strokeWidth="4">
          <path d="M14,2L3,13L14,24M28,2L39,13L28,24" />
        </svg>
      </button>
      <Dock />
    </div>
  );
}
